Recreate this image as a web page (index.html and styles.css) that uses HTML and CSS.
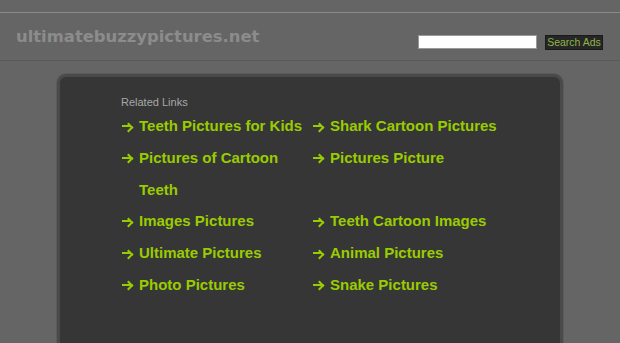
FILE: index.html
```html
<!DOCTYPE html>
<html lang="en">
<head>
  <meta charset="UTF-8">
  <title>ultimatebuzzypictures.net</title>
  <link rel="stylesheet" href="styles.css">
</head>
<body>
  <div class="header">
    <div class="logo">ultimatebuzzypictures.net</div>
    <form class="search">
      <input type="text" class="search-box">
      <button type="button" class="search-btn">Search Ads</button>
    </form>
  </div>

  <div class="content">
    <div class="related">Related Links</div>
    <ul class="links">
      <li><a href="#">Teeth Pictures for Kids</a></li>
      <li><a href="#">Shark Cartoon Pictures</a></li>
      <li><a href="#">Pictures of Cartoon Teeth</a></li>
      <li><a href="#">Pictures Picture</a></li>
      <li><a href="#">Images Pictures</a></li>
      <li><a href="#">Teeth Cartoon Images</a></li>
      <li><a href="#">Ultimate Pictures</a></li>
      <li><a href="#">Animal Pictures</a></li>
      <li><a href="#">Photo Pictures</a></li>
      <li><a href="#">Snake Pictures</a></li>
    </ul>
  </div>
</body>
</html>
```

FILE: styles.css
```css
* {
  box-sizing: border-box;
}
html, body {
  margin: 0;
  height: 100%;
  overflow: hidden;
  background: #656565;
  font-family: 'Liberation Sans', Arial, sans-serif;
}
.header {
  margin-top: 12px;
  border-top: 1px solid #8a8a8a;
  border-bottom: 1px solid #5a5a5a;
  height: 49px;
  display: flex;
  justify-content: space-between;
  align-items: flex-start;
  padding: 0 17px 0 16px;
}
.logo {
  margin-top: 14px;
  font-family: 'DejaVu Sans', Verdana, sans-serif;
  font-size: 16.4px;
  font-weight: 700;
  color: #8c8c8c;
}
.search {
  margin: 22px 0 0;
  display: flex;
  gap: 8px;
}
.search-box {
  width: 119px;
  height: 14px;
  padding: 0;
  border: 1px solid #999;
  background: #fff;
}
.search-btn {
  width: 58px;
  height: 15px;
  padding: 0;
  border: 1px solid #1a1a1a;
  background: #262626;
  color: #8fb548;
  font-family: 'Liberation Sans', Arial, sans-serif;
  font-size: 10.5px;
  line-height: 13px;
}
.content {
  margin: 13px 0 0 57px;
  width: 506px;
  height: 320px;
  background: #363636;
  border: 3px solid #4a4a4a;
  border-radius: 9px;
  box-shadow: 0 0 0 1px #5b5b5b;
  padding: 19px 0 0 61px;
}
.related {
  font-size: 11px;
  color: #a8a8a8;
  margin-bottom: 2px;
}
.links {
  list-style: none;
  margin: 0;
  padding: 0;
  display: grid;
  grid-template-columns: 191px 191px;
}
.links li {
  position: relative;
  padding-left: 18px;
  font-size: 15px;
  font-weight: 700;
  line-height: 31.8px;
}
/* arrow: shaft + chevron head */
.links li::before {
  content: "";
  position: absolute;
  left: 1px;
  top: 15px;
  width: 9px;
  height: 2px;
  background: #99cc00;
}
.links li::after {
  content: "";
  position: absolute;
  left: 4px;
  top: 13.5px;
  width: 5px;
  height: 5px;
  border-top: 2px solid #99cc00;
  border-right: 2px solid #99cc00;
  transform: rotate(45deg);
}
.links a {
  color: #99cc00;
  text-decoration: none;
}
```
